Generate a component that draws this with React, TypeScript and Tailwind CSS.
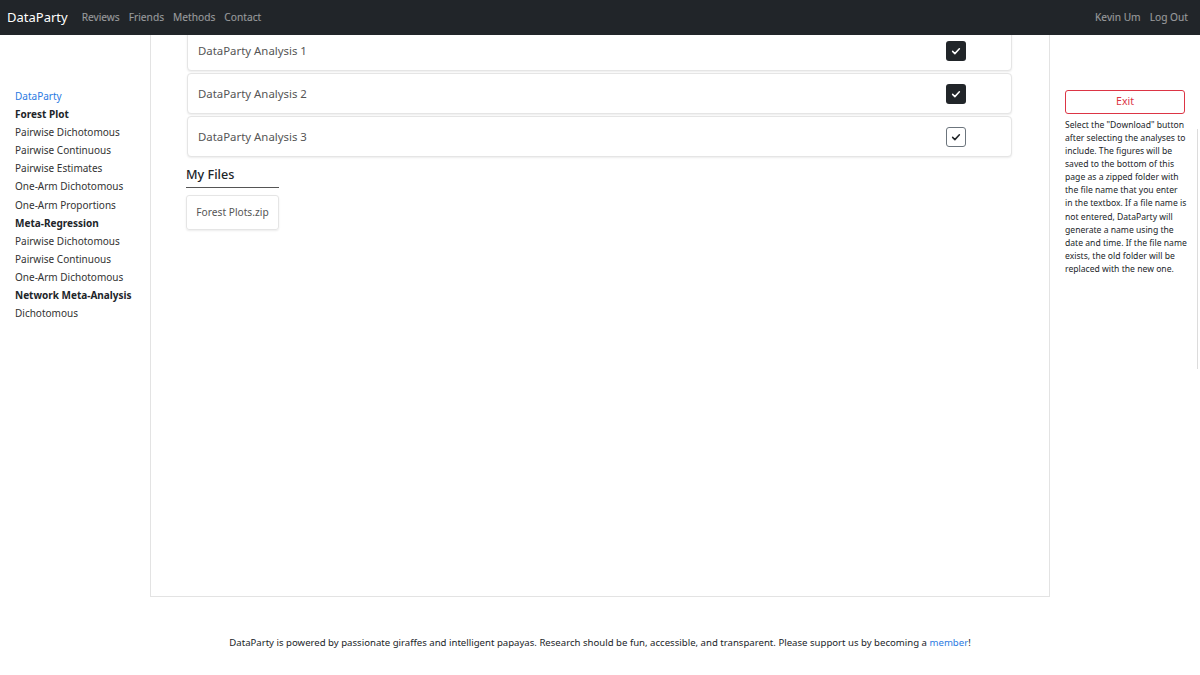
import type { ReactNode } from 'react';

const FONT = { fontFamily: '"Noto Sans", "Open Sans", sans-serif' };

const NAV_LINKS = ['Reviews', 'Friends', 'Methods', 'Contact'];

type SideItem = { label: string; kind: 'brand' | 'head' | 'link' };

const SIDE_ITEMS: SideItem[] = [
  { label: 'DataParty', kind: 'brand' },
  { label: 'Forest Plot', kind: 'head' },
  { label: 'Pairwise Dichotomous', kind: 'link' },
  { label: 'Pairwise Continuous', kind: 'link' },
  { label: 'Pairwise Estimates', kind: 'link' },
  { label: 'One-Arm Dichotomous', kind: 'link' },
  { label: 'One-Arm Proportions', kind: 'link' },
  { label: 'Meta-Regression', kind: 'head' },
  { label: 'Pairwise Dichotomous', kind: 'link' },
  { label: 'Pairwise Continuous', kind: 'link' },
  { label: 'One-Arm Dichotomous', kind: 'link' },
  { label: 'Network Meta-Analysis', kind: 'head' },
  { label: 'Dichotomous', kind: 'link' },
];

function Check({ filled }: { filled: boolean }) {
  return (
    <span
      className={[
        'flex h-5 w-5 items-center justify-center rounded-[3px]',
        filled ? 'bg-[#212529]' : 'border border-[#6c757d] bg-white',
      ].join(' ')}
    >
      <svg viewBox="0 0 16 16" className="h-3 w-3" fill="none">
        <path
          d="M3.5 8.5l3 3 6-6.5"
          stroke={filled ? '#fff' : '#212529'}
          strokeWidth="2"
          strokeLinecap="round"
          strokeLinejoin="round"
        />
      </svg>
    </span>
  );
}

function AnalysisCard({ children, filled }: { children: ReactNode; filled: boolean }) {
  return (
    <div className="flex h-[41px] items-center justify-between rounded-[4px] border border-[#e5e5e5] bg-white pl-[10px] pr-[45px] shadow-[0_1px_2px_rgba(0,0,0,0.08)]">
      <span className="text-[11.4px] text-[#555]">{children}</span>
      <Check filled={filled} />
    </div>
  );
}

export default function App() {
  return (
    <div className="relative min-h-[675px] w-[1200px] bg-white text-[#212529]" style={FONT}>
      {/* fixed top bar, sits over the scrolled page */}
      <nav className="fixed left-0 right-0 top-0 z-10 flex h-[35px] items-center justify-between bg-[#212529] px-[7px]">
        <div className="flex items-center">
          <span className="mr-[14px] text-[13px] text-white">DataParty</span>
          <div className="flex gap-[9px] text-[10.2px] text-white/55">
            {NAV_LINKS.map((l) => (
              <span key={l}>{l}</span>
            ))}
          </div>
        </div>
        <div className="flex gap-[9px] pr-[5px] text-[10.2px] text-white/55">
          <span>Kevin Um</span>
          <span>Log Out</span>
        </div>
      </nav>

      <div className="flex">
        {/* left sidebar */}
        <aside className="w-[150px] shrink-0 pl-[15px] pt-[89px]">
          {SIDE_ITEMS.map((it, i) => (
            <div
              key={i}
              className={[
                'h-[18.1px] text-[10px] leading-[14px]',
                it.kind === 'brand'
                  ? 'text-[#2a7ae2]'
                  : it.kind === 'head'
                  ? 'font-bold text-[#212529]'
                  : 'text-[#333]',
              ].join(' ')}
            >
              {it.label}
            </div>
          ))}
        </aside>

        {/* main panel */}
        <main className="h-[597px] w-[900px] shrink-0 border-x border-b border-[#e3e3e3] pl-[36px] pr-[37px] pt-[30px]">
          <div className="flex flex-col gap-[2px]">
            <AnalysisCard filled>DataParty Analysis 1</AnalysisCard>
            <AnalysisCard filled>DataParty Analysis 2</AnalysisCard>
            <AnalysisCard filled={false}>DataParty Analysis 3</AnalysisCard>
          </div>

          <h3 className="-ml-px mt-[9px] w-[93px] border-b border-[#555] pb-[2px] text-[12.6px] font-medium text-[#212529]">
            My Files
          </h3>
          <div className="-ml-px mt-[7px] flex h-[35px] w-[93px] items-center justify-center rounded-[3px] border border-[#e5e5e5] shadow-[0_1px_2px_rgba(0,0,0,0.08)]">
            <span className="text-[10.2px] text-[#555]">Forest Plots.zip</span>
          </div>
        </main>

        {/* right sidebar */}
        <aside className="relative w-[150px] shrink-0 pl-[15px] pr-[13px] pt-[87px]">
          <button className="h-[24px] w-[120px] rounded-[3px] border border-[#dc3545] text-[10.5px] text-[#dc3545]">
            Exit
          </button>
          <p className="mt-[5px] text-[8.6px] leading-[13.1px] text-[#212529]">
            Select the &quot;Download&quot; button after selecting the analyses to include. The figures will be saved
            to the bottom of this page as a zipped folder with the file name that you enter in the textbox. If a file
            name is not entered, DataParty will generate a name using the date and time. If the file name exists, the
            old folder will be replaced with the new one.
          </p>
          <div className="absolute left-[147px] top-[129px] h-[240px] border-l border-[#dcdcdc]" />
        </aside>
      </div>

      <footer className="pt-[39px] text-center text-[9.6px] text-[#212529]">
        DataParty is powered by passionate giraffes and intelligent papayas. Research should be fun, accessible, and
        transparent. Please support us by becoming a <span className="text-[#2a7ae2]">member</span>!
      </footer>
    </div>
  );
}
